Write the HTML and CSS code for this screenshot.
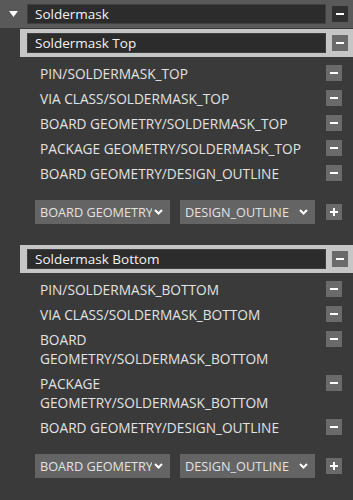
FILE: index.html
```html
<!DOCTYPE html>
<html lang="en">
<head>
  <meta charset="UTF-8" />
  <meta name="viewport" content="width=device-width, initial-scale=1" />
  <title>Soldermask Layers</title>
  <link rel="stylesheet" href="styles.css">
</head>
<body>

  <div class="group-head">
    <button class="toggle" aria-label="Collapse group">
      <svg width="9" height="6" viewBox="0 0 9 6"><path d="M0 0h9L4.5 6z" fill="#fff"/></svg>
    </button>
    <div class="name-field">Soldermask</div>
    <button class="icon-btn dark" aria-label="Remove group"><span class="bar"></span></button>
  </div>

  <section class="layer">
    <div class="layer-head">
      <div class="name-field">Soldermask Top</div>
      <button class="icon-btn" aria-label="Remove layer"><span class="bar"></span></button>
    </div>
    <ul class="subclass-list">
      <li><span>PIN/SOLDERMASK_TOP</span><button class="icon-btn"><span class="bar"></span></button></li>
      <li><span>VIA CLASS/SOLDERMASK_TOP</span><button class="icon-btn"><span class="bar"></span></button></li>
      <li><span>BOARD GEOMETRY/SOLDERMASK_TOP</span><button class="icon-btn"><span class="bar"></span></button></li>
      <li><span>PACKAGE GEOMETRY/SOLDERMASK_TOP</span><button class="icon-btn"><span class="bar"></span></button></li>
      <li><span>BOARD GEOMETRY/DESIGN_OUTLINE</span><button class="icon-btn"><span class="bar"></span></button></li>
    </ul>
    <div class="add-row">
      <div class="select"><span>BOARD GEOMETRY</span><svg width="9" height="6" viewBox="0 0 9 6"><path d="M1 1l3.5 3.5L8 1" fill="none" stroke="#fff" stroke-width="2"/></svg></div>
      <div class="select"><span>DESIGN_OUTLINE</span><svg width="9" height="6" viewBox="0 0 9 6"><path d="M1 1l3.5 3.5L8 1" fill="none" stroke="#fff" stroke-width="2"/></svg></div>
      <button class="icon-btn" aria-label="Add subclass"><span class="bar"></span><span class="bar vert"></span></button>
    </div>
  </section>

  <section class="layer">
    <div class="layer-head">
      <div class="name-field">Soldermask Bottom</div>
      <button class="icon-btn" aria-label="Remove layer"><span class="bar"></span></button>
    </div>
    <ul class="subclass-list">
      <li><span>PIN/SOLDERMASK_BOTTOM</span><button class="icon-btn"><span class="bar"></span></button></li>
      <li><span>VIA CLASS/SOLDERMASK_BOTTOM</span><button class="icon-btn"><span class="bar"></span></button></li>
      <li><span>BOARD GEOMETRY/SOLDERMASK_BOTTOM</span><button class="icon-btn"><span class="bar"></span></button></li>
      <li><span>PACKAGE GEOMETRY/SOLDERMASK_BOTTOM</span><button class="icon-btn"><span class="bar"></span></button></li>
      <li><span>BOARD GEOMETRY/DESIGN_OUTLINE</span><button class="icon-btn"><span class="bar"></span></button></li>
    </ul>
    <div class="add-row">
      <div class="select"><span>BOARD GEOMETRY</span><svg width="9" height="6" viewBox="0 0 9 6"><path d="M1 1l3.5 3.5L8 1" fill="none" stroke="#fff" stroke-width="2"/></svg></div>
      <div class="select"><span>DESIGN_OUTLINE</span><svg width="9" height="6" viewBox="0 0 9 6"><path d="M1 1l3.5 3.5L8 1" fill="none" stroke="#fff" stroke-width="2"/></svg></div>
      <button class="icon-btn" aria-label="Add subclass"><span class="bar"></span><span class="bar vert"></span></button>
    </div>
  </section>

</body>
</html>
```

FILE: styles.css
```css
body {
  font-family: 'Open Sans', sans-serif;
  margin: 0;
  padding: 0;
  background-color: #3a3a3a;
  color: #e2e2e2;
}

button {
  font: inherit;
  cursor: pointer;
}

.group-head {
  display: flex;
  align-items: center;
  height: 28px;
  padding: 0 5px 0 9px;
  background-color: #595959;
  margin-bottom: 1px;
}

.toggle {
  width: 18px;
  height: 20px;
  padding: 0;
  border: none;
  background: none;
  display: flex;
  align-items: center;
}

.name-field {
  flex: 1;
  height: 20px;
  box-sizing: border-box;
  padding: 0 7px;
  background-color: #2c2c2c;
  border: 1px solid #404040;
  color: #f2f2f2;
  font-size: 13.5px;
  line-height: 18px;
  margin-right: 6px;
}

.icon-btn {
  position: relative;
  flex: none;
  width: 16px;
  height: 16px;
  padding: 0;
  border: none;
  background-color: #6a6a6a;
}
.icon-btn.dark {
  background-color: #303030;
}

.bar {
  position: absolute;
  left: 4px;
  top: 7px;
  width: 8px;
  height: 2px;
  background-color: #fff;
}
.bar.vert {
  left: 7px;
  top: 4px;
  width: 2px;
  height: 8px;
}

.layer {
  margin-bottom: 21px;
}

.layer-head {
  display: flex;
  align-items: center;
  height: 28px;
  margin-left: 20px;
  padding: 0 5px 0 7px;
  background-color: #c6c6c6;
}

.subclass-list {
  list-style: none;
  margin: 0;
  padding: 4px 11px 0 40px;
}

.subclass-list li {
  display: flex;
  align-items: flex-start;
  padding: 3px 0;
  font-size: 13.7px;
  line-height: 19px;
}

.subclass-list li span {
  flex: 1;
  margin-right: 16px;
}

.subclass-list li .icon-btn {
  margin-top: 1px;
}

.add-row {
  display: flex;
  align-items: center;
  gap: 10px;
  margin-top: 14px;
  padding-left: 35px;
}

.select {
  display: flex;
  align-items: center;
  width: 135px;
  height: 24px;
  box-sizing: border-box;
  padding: 0 7px 0 5px;
  background-color: #646464;
  font-size: 12.7px;
}
.select span {
  flex: 1;
  overflow: hidden;
  white-space: nowrap;
}
.select svg {
  flex: none;
  margin-left: 2px;
}
.add-row .icon-btn {
  margin-left: 1px;
}
```
